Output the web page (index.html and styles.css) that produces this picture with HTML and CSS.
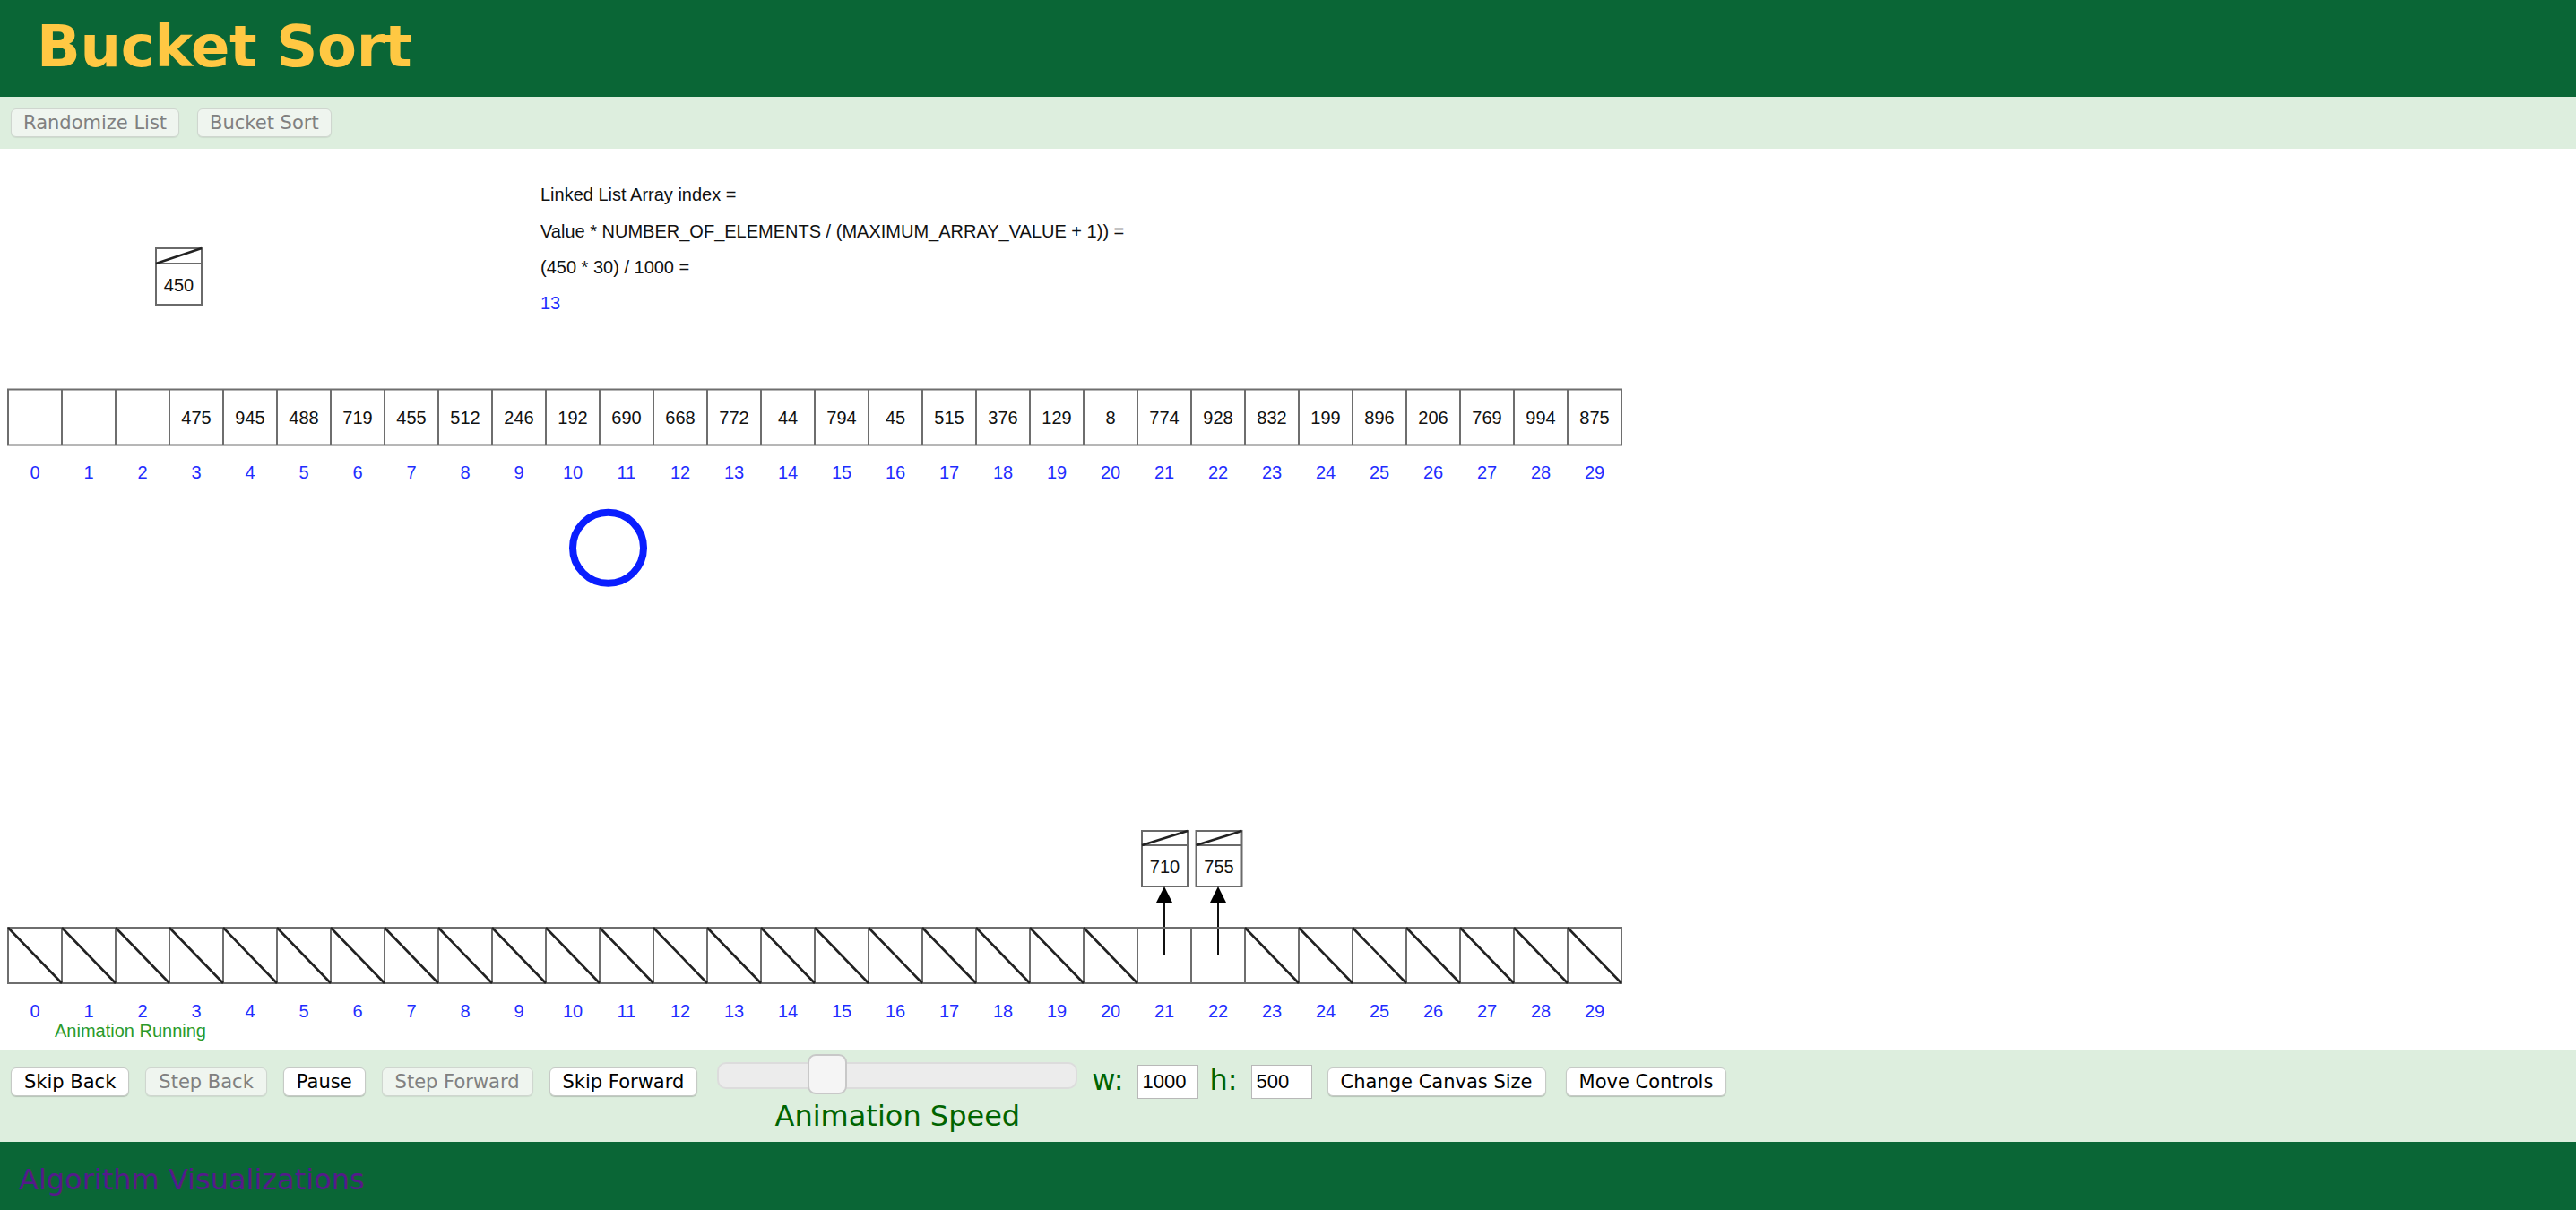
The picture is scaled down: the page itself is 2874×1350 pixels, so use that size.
FILE: index.html
```html
<!DOCTYPE html>
<html>
<head>
<meta charset="utf-8">
<title>Bucket Sort</title>
<link rel="stylesheet" href="styles.css">
</head>
<body>
<header class="title-bar">
  <h1 class="title">Bucket Sort</h1>
</header>
<div class="algo-bar">
  <button class="btn" disabled>Randomize List</button>
  <button class="btn" disabled>Bucket Sort</button>
</div>
<div class="canvas-area">
  <svg class="canvas" width="2874" height="1006" viewBox="0 166 2874 1006" xmlns="http://www.w3.org/2000/svg">
    <!-- node being placed -->
    <g class="node">
      <rect x="174" y="277" width="51" height="63"/>
      <line x1="174" y1="294" x2="225" y2="294"/>
      <line class="diag" x1="174" y1="294" x2="225" y2="277"/>
    </g>
    <text class="t" x="199.5" y="325">450</text>

    <!-- formula -->
    <text class="f" x="603" y="224">Linked List Array index =</text>
    <text class="f" x="603" y="265">Value * NUMBER_OF_ELEMENTS / (MAXIMUM_ARRAY_VALUE + 1)) =</text>
    <text class="f" x="603" y="305">(450 * 30) / 1000 =</text>
    <text class="f blue" x="603" y="345">13</text>

    <!-- top array -->
    <rect class="cells" x="9" y="434.5" width="1800" height="62"/>
    <path class="cells" d="M69 434.5v62M129 434.5v62M189 434.5v62M249 434.5v62M309 434.5v62M369 434.5v62M429 434.5v62M489 434.5v62M549 434.5v62M609 434.5v62M669 434.5v62M729 434.5v62M789 434.5v62M849 434.5v62M909 434.5v62M969 434.5v62M1029 434.5v62M1089 434.5v62M1149 434.5v62M1209 434.5v62M1269 434.5v62M1329 434.5v62M1389 434.5v62M1449 434.5v62M1509 434.5v62M1569 434.5v62M1629 434.5v62M1689 434.5v62M1749 434.5v62"/>
    <g class="vals">
      <text x="219" y="473">475</text><text x="279" y="473">945</text><text x="339" y="473">488</text>
      <text x="399" y="473">719</text><text x="459" y="473">455</text><text x="519" y="473">512</text>
      <text x="579" y="473">246</text><text x="639" y="473">192</text><text x="699" y="473">690</text>
      <text x="759" y="473">668</text><text x="819" y="473">772</text><text x="879" y="473">44</text>
      <text x="939" y="473">794</text><text x="999" y="473">45</text><text x="1059" y="473">515</text>
      <text x="1119" y="473">376</text><text x="1179" y="473">129</text><text x="1239" y="473">8</text>
      <text x="1299" y="473">774</text><text x="1359" y="473">928</text><text x="1419" y="473">832</text>
      <text x="1479" y="473">199</text><text x="1539" y="473">896</text><text x="1599" y="473">206</text>
      <text x="1659" y="473">769</text><text x="1719" y="473">994</text><text x="1779" y="473">875</text>
    </g>
    <g class="idx">
      <text x="39" y="534">0</text><text x="99" y="534">1</text><text x="159" y="534">2</text>
      <text x="219" y="534">3</text><text x="279" y="534">4</text><text x="339" y="534">5</text>
      <text x="399" y="534">6</text><text x="459" y="534">7</text><text x="519" y="534">8</text>
      <text x="579" y="534">9</text><text x="639" y="534">10</text><text x="699" y="534">11</text>
      <text x="759" y="534">12</text><text x="819" y="534">13</text><text x="879" y="534">14</text>
      <text x="939" y="534">15</text><text x="999" y="534">16</text><text x="1059" y="534">17</text>
      <text x="1119" y="534">18</text><text x="1179" y="534">19</text><text x="1239" y="534">20</text>
      <text x="1299" y="534">21</text><text x="1359" y="534">22</text><text x="1419" y="534">23</text>
      <text x="1479" y="534">24</text><text x="1539" y="534">25</text><text x="1599" y="534">26</text>
      <text x="1659" y="534">27</text><text x="1719" y="534">28</text><text x="1779" y="534">29</text>
    </g>

    <!-- highlight circle -->
    <circle class="ring" cx="678.5" cy="611.3" r="39.5"/>

    <!-- bucket nodes -->
    <g class="node">
      <rect x="1274" y="927" width="51" height="62"/>
      <line x1="1274" y1="943" x2="1325" y2="943"/>
      <line class="diag" x1="1274" y1="943" x2="1325" y2="927"/>
      <rect x="1334.5" y="927" width="51" height="62"/>
      <line x1="1334.5" y1="943" x2="1385.5" y2="943"/>
      <line class="diag" x1="1334.5" y1="943" x2="1385.5" y2="927"/>
    </g>
    <text class="t" x="1299.5" y="974">710</text>
    <text class="t" x="1360" y="974">755</text>
    <g class="arrow">
      <line x1="1299" y1="1065" x2="1299" y2="1004"/>
      <polygon points="1299,989 1290,1007 1308,1007"/>
      <line x1="1359" y1="1065" x2="1359" y2="1004"/>
      <polygon points="1359,989 1350,1007 1368,1007"/>
    </g>

    <!-- bottom array -->
    <rect class="cells" x="9" y="1035" width="1800" height="62"/>
    <path class="cells" d="M69 1035v62M129 1035v62M189 1035v62M249 1035v62M309 1035v62M369 1035v62M429 1035v62M489 1035v62M549 1035v62M609 1035v62M669 1035v62M729 1035v62M789 1035v62M849 1035v62M909 1035v62M969 1035v62M1029 1035v62M1089 1035v62M1149 1035v62M1209 1035v62M1269 1035v62M1329 1035v62M1389 1035v62M1449 1035v62M1509 1035v62M1569 1035v62M1629 1035v62M1689 1035v62M1749 1035v62"/>
    <path class="diags" d="M9 1035l60 62M69 1035l60 62M129 1035l60 62M189 1035l60 62M249 1035l60 62M309 1035l60 62M369 1035l60 62M429 1035l60 62M489 1035l60 62M549 1035l60 62M609 1035l60 62M669 1035l60 62M729 1035l60 62M789 1035l60 62M849 1035l60 62M909 1035l60 62M969 1035l60 62M1029 1035l60 62M1089 1035l60 62M1149 1035l60 62M1209 1035l60 62M1389 1035l60 62M1449 1035l60 62M1509 1035l60 62M1569 1035l60 62M1629 1035l60 62M1689 1035l60 62M1749 1035l60 62"/>
    <g class="idx">
      <text x="39" y="1135">0</text><text x="99" y="1135">1</text><text x="159" y="1135">2</text>
      <text x="219" y="1135">3</text><text x="279" y="1135">4</text><text x="339" y="1135">5</text>
      <text x="399" y="1135">6</text><text x="459" y="1135">7</text><text x="519" y="1135">8</text>
      <text x="579" y="1135">9</text><text x="639" y="1135">10</text><text x="699" y="1135">11</text>
      <text x="759" y="1135">12</text><text x="819" y="1135">13</text><text x="879" y="1135">14</text>
      <text x="939" y="1135">15</text><text x="999" y="1135">16</text><text x="1059" y="1135">17</text>
      <text x="1119" y="1135">18</text><text x="1179" y="1135">19</text><text x="1239" y="1135">20</text>
      <text x="1299" y="1135">21</text><text x="1359" y="1135">22</text><text x="1419" y="1135">23</text>
      <text x="1479" y="1135">24</text><text x="1539" y="1135">25</text><text x="1599" y="1135">26</text>
      <text x="1659" y="1135">27</text><text x="1719" y="1135">28</text><text x="1779" y="1135">29</text>
    </g>
    <text class="status" x="61" y="1157">Animation Running</text>
  </svg>
</div>
<div class="controls">
  <button class="btn on">Skip Back</button>
  <button class="btn" disabled>Step Back</button>
  <button class="btn on">Pause</button>
  <button class="btn" disabled>Step Forward</button>
  <button class="btn on">Skip Forward</button>
  <div class="speed">
    <div class="slider">
      <div class="track"></div>
      <div class="thumb"></div>
    </div>
    <div class="speed-label">Animation Speed</div>
  </div>
  <span class="dim-label w-label">w:</span>
  <input class="dim-input" type="text" value="1000">
  <span class="dim-label h-label">h:</span>
  <input class="dim-input" type="text" value="500">
  <button class="btn on canvas-btn">Change Canvas Size</button>
  <button class="btn on move-btn">Move Controls</button>
</div>
<footer class="footer">
  <a class="footer-link" href="#">Algorithm Visualizations</a>
</footer>
</body>
</html>
```
FILE: styles.css
```css
html, body {
  margin: 0;
  padding: 0;
  background: #ffffff;
}
body {
  font-family: "DejaVu Sans", Verdana, sans-serif;
  width: 2874px;
  overflow: hidden;
}
.title-bar {
  height: 108px;
  background: #0a6636;
  padding-left: 41px;
  box-sizing: border-box;
}
.title {
  margin: 0;
  font-size: 64px;
  font-weight: bold;
  line-height: 104px;
  color: #ffc843;
  letter-spacing: -0.3px;
}
.algo-bar {
  height: 58px;
  background: #ddeede;
  display: flex;
  align-items: flex-start;
  padding: 13px 0 0 12px;
  box-sizing: border-box;
  gap: 20px;
}
.btn {
  height: 32px;
  padding: 0 14px;
  border: 1px solid #c6cac6;
  border-radius: 6px;
  background: #ffffff;
  color: #000000;
  font-family: "DejaVu Sans", Verdana, sans-serif;
  font-size: 21px;
  line-height: 30px;
  box-shadow: 0 1px 1px rgba(0, 0, 0, 0.18);
  white-space: nowrap;
  flex: none;
}
.algo-bar .btn {
  padding: 0 13px;
}
.btn:disabled {
  background: #eff5ef;
  color: #808080;
  border-color: #cfd6cf;
  box-shadow: 0 1px 1px rgba(0, 0, 0, 0.08);
}
.canvas-area {
  height: 1006px;
  background: #ffffff;
}
.canvas {
  display: block;
}
.canvas text {
  font-family: "Liberation Sans", Arial, sans-serif;
  font-size: 20px;
}
.canvas .t, .vals text, .idx text {
  text-anchor: middle;
}
.canvas .f, .canvas .t, .vals text {
  fill: #111111;
}
.canvas .blue, .idx text {
  fill: #1f2dff;
}
.canvas .status {
  fill: #2a9a2a;
}
.node rect, .node line {
  fill: #ffffff;
  stroke: #6a6a6a;
  stroke-width: 2;
}
.node .diag {
  stroke: #222222;
  stroke-width: 2.5;
}
.cells {
  fill: none;
  stroke: #6e6e6e;
  stroke-width: 2;
}
.diags {
  fill: none;
  stroke: #222222;
  stroke-width: 2.6;
}
.ring {
  fill: none;
  stroke: #0a1eff;
  stroke-width: 8;
}
.arrow line {
  stroke: #111111;
  stroke-width: 2;
}
.arrow polygon {
  fill: #000000;
}
.controls {
  height: 102px;
  background: #ddeede;
  display: flex;
  align-items: flex-start;
  padding-left: 12px;
  box-sizing: border-box;
}
.controls .btn {
  margin-top: 19px;
  margin-right: 18px;
}
.speed {
  margin-top: 4px;
  margin-left: 4px;
  width: 402px;
  display: flex;
  flex-direction: column;
  align-items: center;
}
.slider {
  position: relative;
  width: 402px;
  height: 46px;
}
.track {
  margin-top: 9px;
  height: 30px;
  box-sizing: border-box;
  border: 2px solid #dcdcdc;
  border-radius: 10px;
  background: #ececec;
}
.thumb {
  position: absolute;
  top: 0;
  left: 101px;
  width: 44px;
  height: 45px;
  box-sizing: border-box;
  border: 2px solid #c8c8c8;
  border-radius: 9px;
  background: #f5f5f5;
}
.speed-label {
  margin-top: 4px;
  font-size: 32px;
  line-height: 38px;
  color: #006400;
  white-space: nowrap;
}
.dim-label {
  margin-top: 14px;
  font-size: 32px;
  line-height: 38px;
  color: #006400;
}
.w-label {
  margin-left: 16px;
}
.h-label {
  margin-left: 13px;
}
.dim-input {
  margin-top: 16px;
  margin-left: 15px;
  width: 68px;
  height: 38px;
  box-sizing: border-box;
  border: 1px solid #b8b8b8;
  padding: 0 5px;
  font-family: "Liberation Sans", Arial, sans-serif;
  font-size: 22px;
  color: #000000;
  background: #ffffff;
}
.controls .canvas-btn {
  margin-left: 17px;
  margin-right: 22px;
}
.footer {
  height: 76px;
  background: #0a6636;
  padding: 23px 0 0 21px;
  box-sizing: border-box;
}
.footer-link {
  font-size: 32px;
  line-height: 38px;
  color: #551a8b;
  text-decoration: none;
}
```
